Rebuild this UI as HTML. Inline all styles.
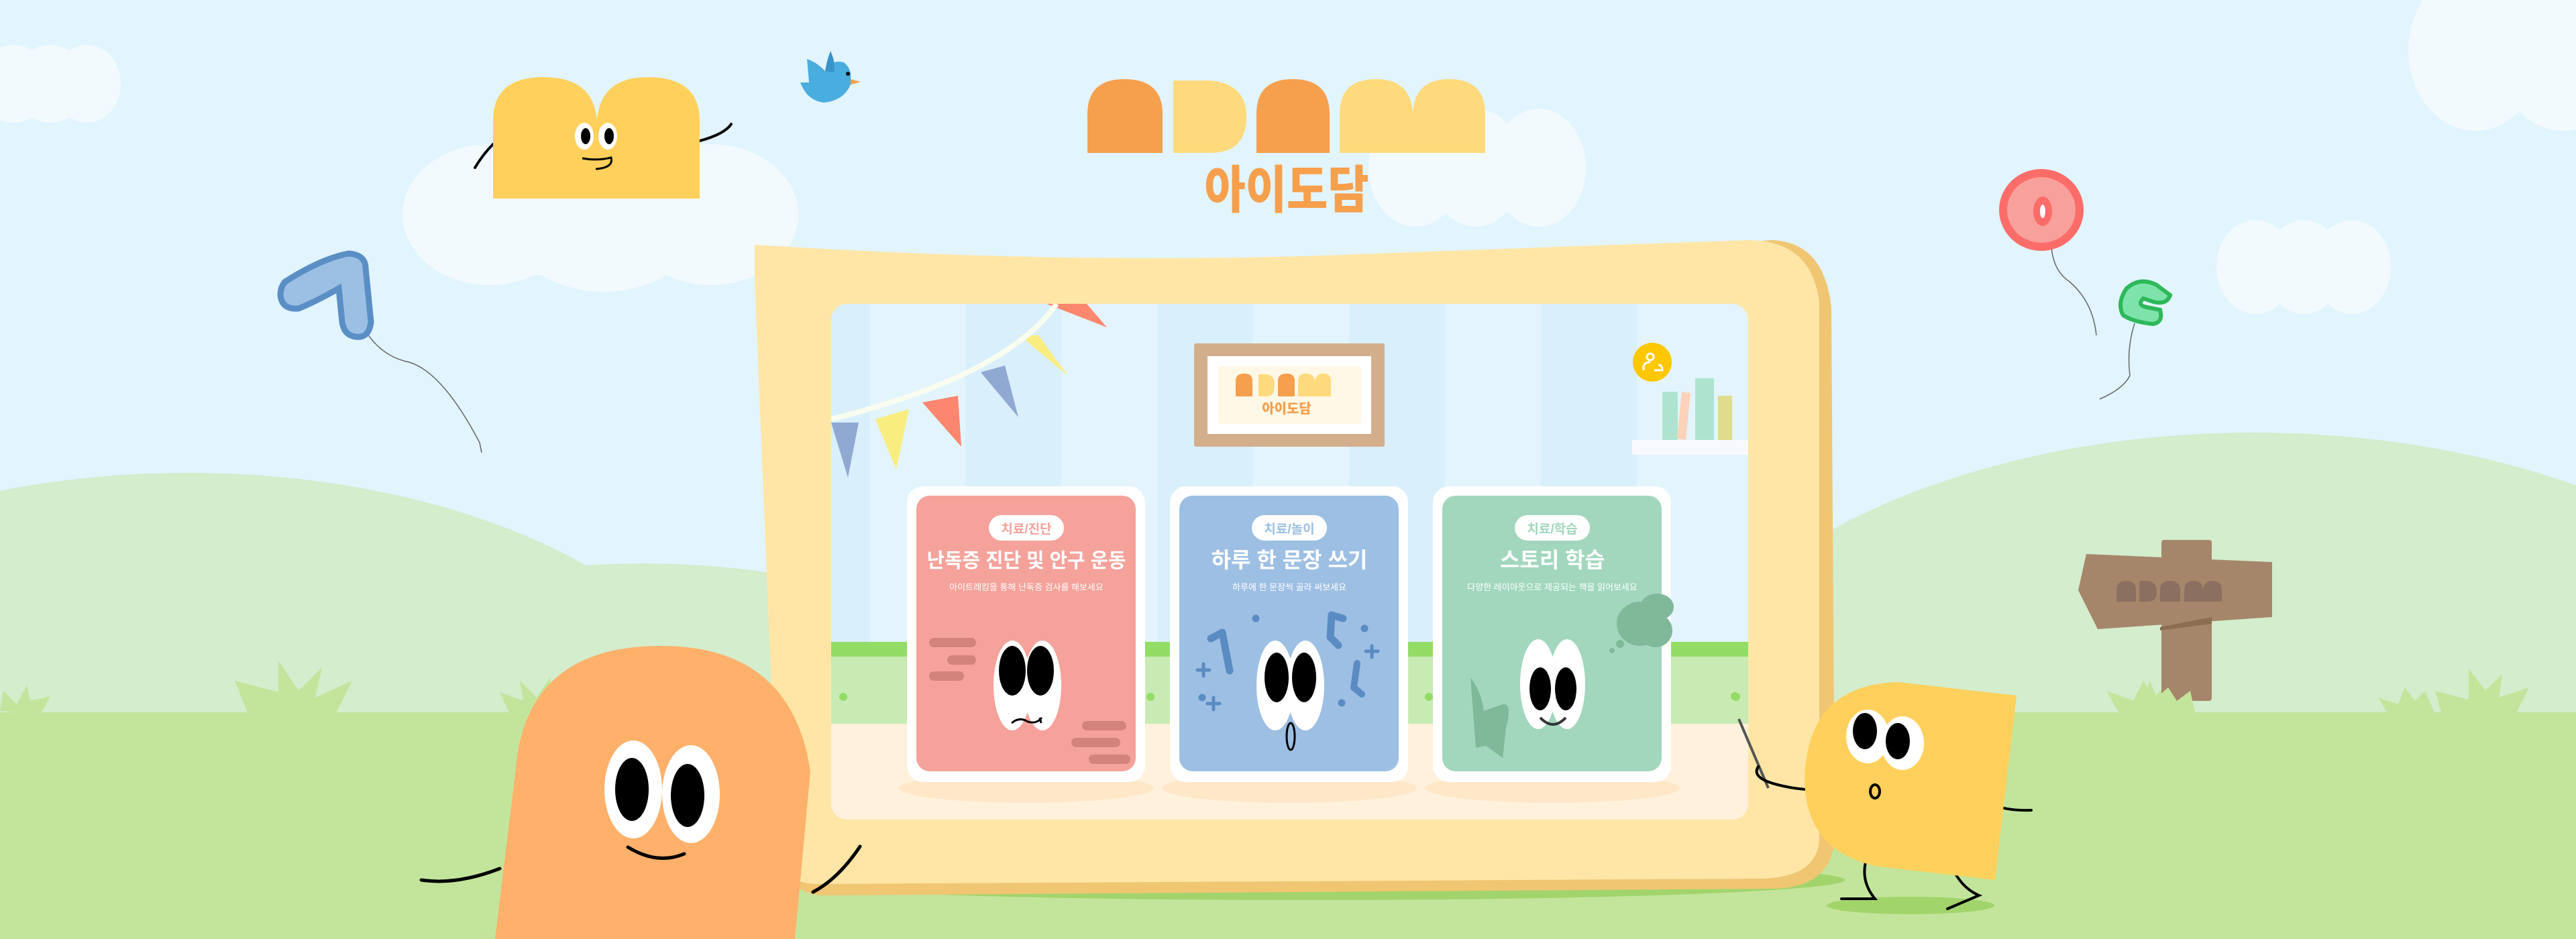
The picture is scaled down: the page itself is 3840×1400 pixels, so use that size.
<!DOCTYPE html>
<html><head><meta charset="utf-8"><style>
html,body{margin:0;padding:0;width:3840px;height:1400px;overflow:hidden;background:#e2f4fe}
svg{display:block}
text{font-family:"Liberation Sans","Noto Sans CJK KR",sans-serif}
</style></head><body>
<svg width="3840" height="1400" viewBox="0 0 3840 1400" xmlns="http://www.w3.org/2000/svg">
<rect width="3840" height="1400" fill="#e2f4fe"/>
<g fill="#f2fafe">
<ellipse cx="20" cy="125" rx="55" ry="58"/><ellipse cx="75" cy="125" rx="55" ry="58"/><ellipse cx="130" cy="125" rx="50" ry="58"/>
<ellipse cx="730" cy="320" rx="130" ry="105"/><ellipse cx="900" cy="320" rx="150" ry="115"/><ellipse cx="1060" cy="320" rx="130" ry="105"/><rect x="650" y="300" width="480" height="110" rx="50"/>
<ellipse cx="2110" cy="250" rx="70" ry="88"/><ellipse cx="2200" cy="250" rx="70" ry="88"/><ellipse cx="2294" cy="250" rx="70" ry="88"/>
<ellipse cx="3690" cy="75" rx="100" ry="120"/><ellipse cx="3820" cy="75" rx="100" ry="120"/>
<ellipse cx="3362" cy="398" rx="58" ry="70"/><ellipse cx="3434" cy="398" rx="58" ry="70"/><ellipse cx="3506" cy="398" rx="58" ry="70"/>
</g>
<g fill="#d3edcd">
<ellipse cx="280" cy="1150" rx="820" ry="445"/>
<ellipse cx="960" cy="1120" rx="600" ry="280"/>
<ellipse cx="2700" cy="1150" rx="400" ry="330"/>
<ellipse cx="3360" cy="1180" rx="920" ry="535"/>
</g>
<g fill="#c2e59b">
<polygon points="0,1060 5,1030 25,1050 40,1022 45,1045 75,1038 60,1065"/>
<polygon points="370,1065 350,1015 415,1032 415,985 445,1030 480,995 470,1040 525,1015 500,1065"/>
<polygon points="760,1065 745,1032 780,1045 775,1015 800,1040 820,1010 825,1065"/>
<polygon points="3160,1065 3140,1030 3180,1045 3195,1015 3210,1040 3230,1020 3240,1045 3270,1030 3250,1065"/>
<polygon points="3560,1065 3545,1040 3575,1050 3585,1025 3600,1045 3615,1030 3630,1065"/>
<polygon points="3640,1065 3630,1030 3680,1043 3680,996 3705,1030 3730,1005 3725,1040 3770,1025 3750,1065"/>
</g>
<rect x="0" y="1062" width="3840" height="338" fill="#c2e59b"/>
<ellipse cx="1950" cy="1312" rx="800" ry="30" fill="#a2d46c"/>

<path d="M535 475 Q560 530 610 540 Q660 555 715 660 L718 675" stroke="#666" stroke-width="1.5" fill="none"/>
<path d="M425 420 Q480 385 520 378 Q545 380 545 400 L553 480 Q550 505 530 502 Q513 500 510 480 L505 430 Q470 450 445 460 Q420 462 418 440 Q418 428 425 420Z" fill="#9cbfe4" stroke="#5a8fc5" stroke-width="9"/>
<path d="M3058 350 Q3055 400 3085 420 Q3120 450 3125 500" stroke="#666" stroke-width="1.5" fill="none"/>
<ellipse cx="3043" cy="313" rx="57" ry="55" fill="#f8a09b" stroke="#fc6c69" stroke-width="12"/>
<ellipse cx="3045" cy="315" rx="14" ry="22" fill="#fc6c69"/><ellipse cx="3045" cy="315" rx="4" ry="10" fill="#fff"/>
<path d="M3182 482 Q3170 520 3175 560 Q3165 580 3130 595" stroke="#666" stroke-width="1.5" fill="none"/>
<path d="M3170 430 Q3190 412 3215 425 L3235 440 Q3230 455 3210 450 L3195 445 Q3185 455 3200 458 L3220 462 Q3225 480 3210 483 Q3180 480 3165 470 Q3155 452 3170 430Z" fill="#7ee3ab" stroke="#2db85a" stroke-width="6"/>
<g transform="translate(1188,68)">
<path d="M15 20 Q30 25 42 38 Q50 20 70 25 Q82 35 80 50 L92 55 L80 58 Q70 82 40 85 Q15 82 5 55 L18 55Z" fill="#4aaddf"/>
<path d="M42 38 Q45 20 50 8 Q58 25 55 40Z" fill="#3894c9"/>
<circle cx="76" cy="42" r="3" fill="#000"/>
<polygon points="80,50 95,54 80,58" fill="#f5a04a"/>
</g>

<g>
<path d="M708 250 Q720 230 735 215 M1043 210 Q1080 200 1090 185 M790 275 L800 290 L812 275 M975 275 L990 290 L998 280" stroke="#000" stroke-width="4" fill="none" stroke-linecap="round"/>
<path d="M735 296 L735 180 Q735 115 810 115 Q885 115 890 180 Q895 115 965 115 Q1043 115 1043 180 L1043 296Z" fill="#ffd15c"/>
<ellipse cx="871" cy="203" rx="14" ry="20" fill="#fff"/><ellipse cx="906" cy="203" rx="14" ry="20" fill="#fff"/>
<ellipse cx="873" cy="203" rx="7" ry="12" fill="#000"/><ellipse cx="908" cy="203" rx="7" ry="12" fill="#000"/>
<path d="M868 236 Q890 240 911 235 Q915 250 888 252" stroke="#000" stroke-width="3" fill="none"/>
</g>

<g>
<path d="M1621 228 L1621 170 Q1621 118 1676 118 Q1733 118 1733 170 L1733 228Z" fill="#f69f4c"/>
<path d="M1749 228 L1749 120 L1804 120 Q1858 125 1858 174 Q1858 228 1804 228Z" fill="#ffda7c"/>
<path d="M1873 228 L1873 170 Q1873 118 1927 118 Q1982 118 1982 170 L1982 228Z" fill="#f69f4c"/>
<path d="M1997 228 L1997 170 Q1997 118 2051 118 Q2104 118 2106 170 Q2108 118 2160 118 Q2214 118 2214 170 L2214 228Z" fill="#ffda7c"/>
<text x="1918" y="310" text-anchor="middle" font-size="76" font-weight="900" fill="#f69f4c" style="font-family:'Noto Sans CJK KR',sans-serif" textLength="245" lengthAdjust="spacingAndGlyphs">아이도담</text>
</g>

<path d="M1140 375 Q1600 410 2000 395 Q2400 380 2640 358 Q2720 360 2730 460 L2735 1250 Q2730 1325 2640 1325 L1230 1335 Q1175 1335 1170 1280 L1140 430Z" fill="#f0c673"/>
<path d="M1125 365 Q1600 395 2000 380 Q2400 365 2610 358 Q2700 360 2712 450 L2712 1250 Q2710 1310 2620 1310 L1220 1318 Q1165 1318 1160 1270 L1125 420Z" fill="#ffe6a6"/>
<clipPath id="win"><rect x="1239" y="453" width="1367" height="769" rx="24"/></clipPath>
<g clip-path="url(#win)">
<rect x="1239" y="453" width="1367" height="769" fill="#e3f4fd"/>
<g fill="#d9effc">
<rect x="1239" y="453" width="58" height="520"/><rect x="1439" y="453" width="143" height="520"/><rect x="1725" y="453" width="143" height="520"/><rect x="2011" y="453" width="143" height="520"/><rect x="2297" y="453" width="143" height="520"/>
</g>
<rect x="1239" y="957" width="1367" height="22" fill="#93dc66"/>
<rect x="1239" y="979" width="1367" height="100" fill="#c7ebb3"/>
<g fill="#93dc66"><circle cx="1257" cy="1039" r="6"/><circle cx="1715" cy="1039" r="6"/><circle cx="2130" cy="1039" r="6"/><circle cx="2588" cy="1039" r="6"/></g>
<rect x="1239" y="1079" width="1367" height="143" fill="#fff1dc"/>
<polygon points="1560,453 1650,488 1620,453" fill="#fd876e"/>
<polygon points="1520,500 1592,560 1548,500" fill="#faed7f"/>
<polygon points="1462,555 1518,622 1498,545" fill="#8fa9d2"/>
<polygon points="1375,600 1433,666 1428,590" fill="#fd876e"/>
<polygon points="1305,625 1336,700 1355,610" fill="#faed7f"/>
<polygon points="1239,630 1264,712 1280,630" fill="#8fa9d2"/>
<path d="M1239 625 Q1500 560 1575 453" stroke="#f8fdf0" stroke-width="8" fill="none"/>
<rect x="1780" y="512" width="284" height="154" rx="3" fill="#d3ae8c"/>
<rect x="1800" y="531" width="244" height="116" fill="#fff"/>
<rect x="1816" y="546" width="213" height="86" fill="#fff8e6"/>
<path d="M1842 591 L1842 568 Q1842 557 1855 557 Q1867 557 1867 568 L1867 591Z" fill="#f69f4c"/>
<path d="M1876 591 L1876 558 L1888 558 Q1900 560 1900 574 Q1900 591 1888 591Z" fill="#ffda7c"/>
<path d="M1905 591 L1905 568 Q1905 557 1918 557 Q1930 557 1930 568 L1930 591Z" fill="#f69f4c"/>
<path d="M1935 591 L1935 568 Q1935 557 1947 557 Q1958 557 1960 568 Q1962 557 1973 557 Q1984 557 1984 568 L1984 591Z" fill="#ffda7c"/>
<text x="1918" y="616" text-anchor="middle" font-size="20" font-weight="900" fill="#f69f4c" style="font-family:'Noto Sans CJK KR',sans-serif">아이도담</text>
<circle cx="2463" cy="540" r="29" fill="#ffc700"/>
<circle cx="2460" cy="532" r="5" fill="none" stroke="#fff" stroke-width="3"/>
<path d="M2450 552 L2450 546 Q2452 540 2460 540 M2466 552 L2478 552 Q2478 544 2472 544" stroke="#fff" stroke-width="3" fill="none"/>
<rect x="2478" y="584" width="23" height="72" fill="#aee4cf"/>
<polygon points="2507,584 2520,586 2513,656 2500,654" fill="#fcd2b9"/>
<rect x="2527" y="564" width="28" height="92" fill="#aee4cf"/>
<rect x="2561" y="590" width="21" height="66" fill="#e0dc8b"/>
<rect x="2433" y="656" width="173" height="22" fill="#f8f9ff"/>
</g>

<g>
<ellipse cx="1530" cy="1175" rx="190" ry="22" fill="#ffe7c8"/>
<ellipse cx="1922" cy="1175" rx="190" ry="22" fill="#ffe7c8"/>
<ellipse cx="2314" cy="1175" rx="190" ry="22" fill="#ffe7c8"/>
<rect x="1352" y="725" width="355" height="441" rx="24" fill="#fff"/>
<rect x="1366" y="739" width="327" height="411" rx="20" fill="#f5a29b"/>
<rect x="1744" y="725" width="355" height="441" rx="24" fill="#fff"/>
<rect x="1758" y="739" width="327" height="411" rx="20" fill="#9dbfe3"/>
<rect x="2136" y="725" width="355" height="441" rx="24" fill="#fff"/>
<rect x="2150" y="739" width="327" height="411" rx="20" fill="#a2d7bd"/>

<rect x="1474" y="768" width="112" height="38" rx="19" fill="#fff"/>
<rect x="1866" y="768" width="112" height="38" rx="19" fill="#fff"/>
<rect x="2258" y="768" width="112" height="38" rx="19" fill="#fff"/>
<text x="1530" y="795" text-anchor="middle" font-size="19" font-weight="700" fill="#f5a29b">치료/진단</text>
<text x="1922" y="795" text-anchor="middle" font-size="19" font-weight="700" fill="#9dbfe3">치료/놀이</text>
<text x="2314" y="795" text-anchor="middle" font-size="19" font-weight="700" fill="#a2d7bd">치료/학습</text>
<text x="1530" y="846" text-anchor="middle" font-size="30" font-weight="700" fill="#fff" textLength="297" lengthAdjust="spacingAndGlyphs">난독증 진단 및 안구 운동</text>
<text x="1922" y="846" text-anchor="middle" font-size="32" font-weight="700" fill="#fff">하루 한 문장 쓰기</text>
<text x="2314" y="846" text-anchor="middle" font-size="32" font-weight="700" fill="#fff">스토리 학습</text>
<text x="1530" y="880" text-anchor="middle" font-size="13" fill="#fff">아이트래킹을 통해 난독증 검사를 해보세요</text>
<text x="1922" y="880" text-anchor="middle" font-size="13" fill="#fff">하루에 한 문장씩 골라 써보세요</text>
<text x="2314" y="880" text-anchor="middle" font-size="13" fill="#fff">다양한 레이아웃으로 제공되는 책을 읽어보세요</text>

<g fill="#d4837c"><rect x="1385" y="951" width="70" height="14" rx="7"/><rect x="1412" y="977" width="43" height="14" rx="7"/><rect x="1385" y="1001" width="52" height="14" rx="7"/><rect x="1613" y="1075" width="66" height="14" rx="7"/><rect x="1597" y="1100" width="73" height="14" rx="7"/><rect x="1623" y="1125" width="62" height="14" rx="7"/></g>
<ellipse cx="1509" cy="1022" rx="28" ry="67" fill="#fff"/><ellipse cx="1554" cy="1022" rx="28" ry="67" fill="#fff"/>
<ellipse cx="1509" cy="1000" rx="20" ry="37" fill="#000"/><ellipse cx="1551" cy="1000" rx="20" ry="37" fill="#000"/>
<path d="M1508 1078 Q1520 1068 1532 1076 Q1545 1080 1553 1070 M1550 1070 L1552 1078" stroke="#000" stroke-width="3" fill="none"/>
<ellipse cx="1901" cy="1022" rx="28" ry="67" fill="#fff"/><ellipse cx="1946" cy="1022" rx="28" ry="67" fill="#fff"/>
<ellipse cx="1903" cy="1010" rx="18" ry="37" fill="#000"/><ellipse cx="1944" cy="1010" rx="18" ry="37" fill="#000"/>
<ellipse cx="1924" cy="1098" rx="6" ry="20" fill="none" stroke="#000" stroke-width="3"/>
<g fill="#5a8cc3" stroke="#5a8cc3" stroke-linecap="round" stroke-linejoin="round">
<path d="M1805 952 L1822 943 L1833 1000" fill="none" stroke-width="11"/>
<path d="M2002 922 L1985 917 L1983 950 L1995 962" fill="none" stroke-width="11"/>
<path d="M2023 989 L2018 1025 L2030 1035" fill="none" stroke-width="10"/>
<circle cx="1872" cy="922" r="5"/><circle cx="2034" cy="937" r="5"/><circle cx="2000" cy="1048" r="5"/><circle cx="1792" cy="1040" r="5"/>
<path d="M1794 990 L1794 1008 M1785 999 L1803 999 M2045 963 L2045 980 M2036 971 L2054 971 M1809 1040 L1809 1058 M1800 1049 L1818 1049" fill="none" stroke-width="5"/>
</g>
<g fill="#7fb999">
<ellipse cx="2445" cy="930" rx="35" ry="33"/><ellipse cx="2470" cy="905" rx="25" ry="20"/><ellipse cx="2468" cy="940" rx="25" ry="25"/>
<circle cx="2415" cy="960" r="6"/><circle cx="2403" cy="970" r="4"/>
<path d="M2192 1010 Q2208 1030 2212 1060 L2240 1050 Q2255 1048 2245 1085 L2240 1130 L2215 1112 L2200 1115 Z"/>
</g>
<ellipse cx="2293" cy="1020" rx="27" ry="67" fill="#fff"/><ellipse cx="2336" cy="1020" rx="27" ry="67" fill="#fff"/>
<ellipse cx="2296" cy="1027" rx="16" ry="32" fill="#000"/><ellipse cx="2334" cy="1027" rx="16" ry="32" fill="#000"/>
<path d="M2296 1070 Q2315 1090 2334 1070" stroke="#333" stroke-width="4" fill="none"/>
</g>

<g>
<rect x="3222" y="805" width="75" height="240" rx="4" fill="#a6866a"/>
<path d="M3110 826 L3387 838 L3387 920 L3127 938 L3098 880Z" fill="#a6866a"/>
<path d="M3220 940 L3297 930 L3297 920 L3220 935Z" fill="#8b6d54"/>
<g fill="#8b7060">
<path d="M3155 897 L3155 880 Q3155 866 3170 866 Q3184 866 3184 880 L3184 897Z"/>
<path d="M3189 897 L3189 866 L3202 866 Q3215 868 3215 882 Q3215 897 3202 897Z"/>
<path d="M3220 897 L3220 880 Q3220 866 3235 866 Q3250 866 3250 880 L3250 897Z"/>
<path d="M3256 897 L3256 880 Q3256 866 3270 866 Q3283 866 3284 880 Q3285 866 3298 866 Q3312 866 3312 880 L3312 897Z"/>
</g>
<polygon points="3160,1062 3150,1035 3192,1048 3205,1015 3215,1040 3232,1025 3245,1045 3265,1030 3272,1062" fill="#c2e59b"/>
</g>

<g>
<path d="M628 1312 Q680 1320 745 1295 M1212 1330 Q1250 1310 1282 1262" stroke="#000" stroke-width="5" fill="none" stroke-linecap="round"/>
<path d="M738 1400 L772 1120 Q800 963 985 963 Q1180 963 1208 1150 L1185 1400Z" fill="#ffb06a"/>
<ellipse cx="944" cy="1177" rx="43" ry="73" fill="#fff"/><ellipse cx="1030" cy="1184" rx="43" ry="73" fill="#fff"/>
<ellipse cx="942" cy="1177" rx="25" ry="47" fill="#000"/><ellipse cx="1025" cy="1186" rx="25" ry="47" fill="#000"/>
<path d="M936 1263 Q980 1290 1020 1273" stroke="#000" stroke-width="5" fill="none" stroke-linecap="round"/>
</g>

<g>
<ellipse cx="2848" cy="1350" rx="125" ry="13" fill="#a2d46c"/>
<path d="M2592 1072 L2636 1175" stroke="#555" stroke-width="4"/>
<circle cx="2586" cy="1038" r="6" fill="#93dc66"/>
<path d="M2621 1143 Q2610 1160 2650 1170 Q2680 1178 2717 1178 M2933 1180 Q2970 1210 3028 1208 M2785 1273 Q2770 1310 2795 1340 L2745 1340 M2902 1270 Q2915 1320 2950 1335 L2903 1355" stroke="#000" stroke-width="4" fill="none" stroke-linecap="round"/>
<path d="M2830 1017 L3006 1037 L2974 1312 L2800 1292 Q2690 1270 2690 1160 Q2695 1020 2830 1017Z" fill="#ffd15c"/>
<ellipse cx="2784" cy="1098" rx="32" ry="40" fill="#fff"/><ellipse cx="2836" cy="1108" rx="32" ry="40" fill="#fff"/>
<ellipse cx="2780" cy="1090" rx="18" ry="27" fill="#000"/><ellipse cx="2829" cy="1105" rx="18" ry="27" fill="#000"/>
<ellipse cx="2795" cy="1180" rx="7" ry="10" fill="none" stroke="#000" stroke-width="4"/>
</g>
</svg>
</body></html>
